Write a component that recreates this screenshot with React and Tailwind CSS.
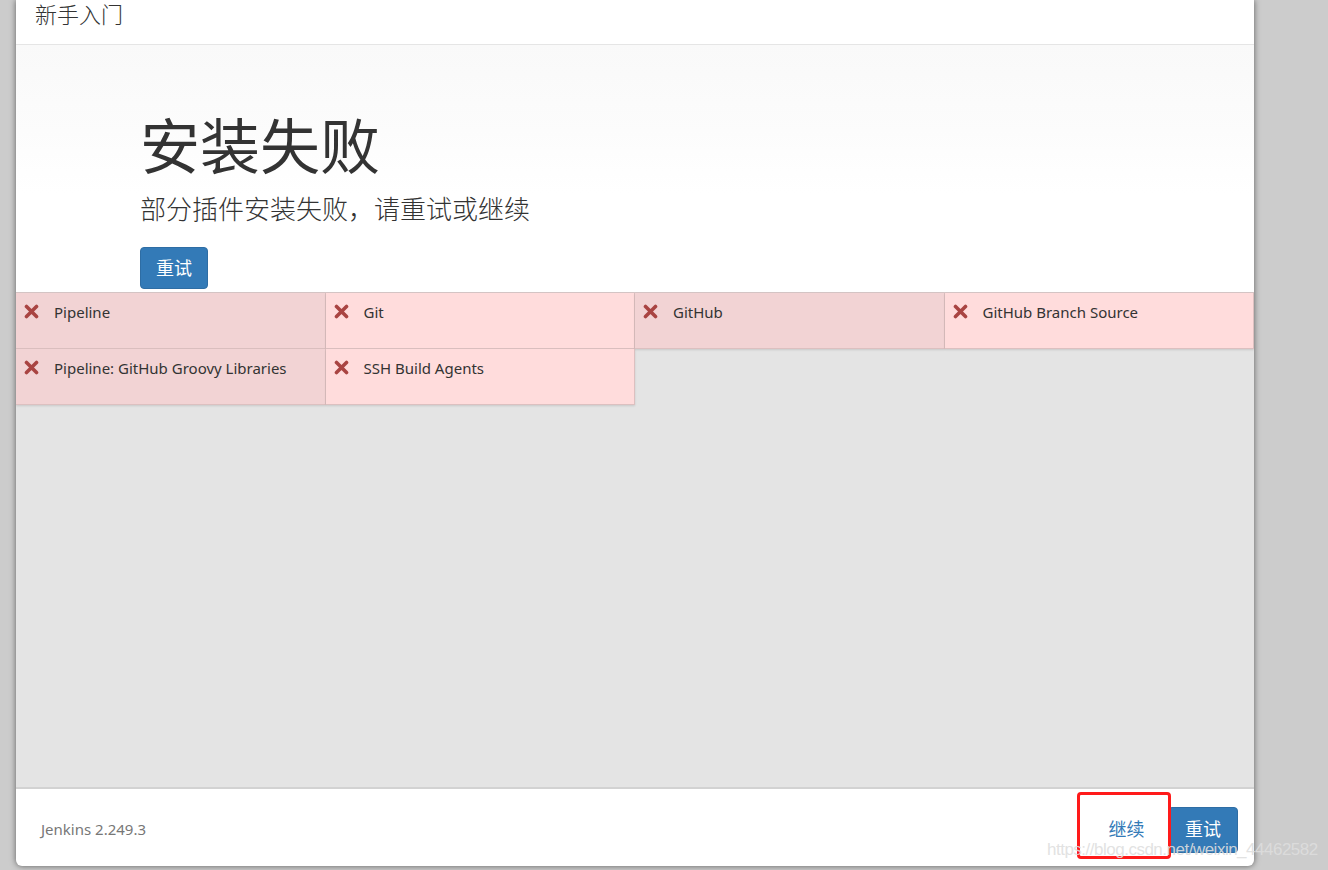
import React from "react";

const font = { fontFamily: '"Noto Sans", "Open Sans", "Noto Sans CJK SC", sans-serif' };

function XIcon() {
  return (
    <svg width="15" height="15" viewBox="0 0 15 15" className="shrink-0">
      <path d="M2.5 2.5 L12.5 12.5 M12.5 2.5 L2.5 12.5" stroke="#a94442" strokeWidth="3.6" strokeLinecap="round" />
    </svg>
  );
}

const items = [
  { name: "Pipeline", dark: true },
  { name: "Git", dark: false },
  { name: "GitHub", dark: true },
  { name: "GitHub Branch Source", dark: false },
  { name: "Pipeline: GitHub Groovy Libraries", dark: true },
  { name: "SSH Build Agents", dark: false },
];

export default function App() {
  return (
    <div className="relative w-[1328px] h-[870px] bg-[#cccccc] overflow-hidden" style={font}>
      <div className="ml-4 w-[1238px] h-[866px] bg-white rounded-b-md shadow-[0_0_6px_rgba(0,0,0,0.55)] flex flex-col overflow-hidden">
        <div className="h-[45px] shrink-0 border-b border-[#e5e5e5] pl-[19px] flex items-start">
          <div className="text-[22px] leading-[28px] text-[#333] font-light">新手入门</div>
        </div>
        <div className="h-[247px] shrink-0 bg-[linear-gradient(to_bottom,#f9f9f9_0%,#fcfcfc_35%,#ffffff_60%)] pl-[124px] pt-[68px]">
          <div className="text-[60px] leading-[66px] text-[#333]">安装失败</div>
          <div className="mt-[13px] text-[26px] leading-[34px] text-[#333] font-light">部分插件安装失败，请重试或继续</div>
          <button className="mt-[21px] h-[42px] px-[15px] bg-[#337ab7] border border-[#2e6da4] rounded text-white text-[18px] leading-none">重试</button>
        </div>
        <div className="flex-1 bg-[#e4e4e4] border-t border-[#d6c6c6]">
          <div className="grid grid-cols-4">
            {items.map((it) => (
              <div
                key={it.name}
                className={`h-[56px] flex items-start gap-[15px] pl-[8px] pt-[9px] border-r border-b border-[#dcc0c0] shadow-[0_1px_2px_rgba(0,0,0,0.12)] ${it.dark ? "bg-[#f2d3d4]" : "bg-[#ffdcdc]"}`}
              >
                <div className="pt-[2px]"><XIcon /></div>
                <span className="text-[15px] leading-[20px] text-[#333]">{it.name}</span>
              </div>
            ))}
          </div>
        </div>
        <div className="h-[79px] shrink-0 border-t-2 border-[#d2d2d2] flex items-center justify-between pl-[25px] pr-[16px]">
          <span className="text-[15px] text-[#777] mt-[4px]">Jenkins 2.249.3</span>
          <div className="flex items-center mt-[4px]">
            <button className="h-[46px] w-[70px] text-[18px] text-[#337ab7] mr-[5px] pr-[3px]">继续</button>
            <button className="h-[46px] px-4 bg-[#337ab7] border border-[#2e6da4] rounded text-white text-[18px]">重试</button>
          </div>
        </div>
      </div>
      <div className="absolute left-[1077px] top-[792px] w-[94px] h-[67px] border-[3px] border-[#ff1a1a] rounded-[4px]" />
      <div
        className="absolute left-[1047px] top-[839px] text-[17px] leading-[22px] tracking-[-0.5px] whitespace-nowrap text-[rgba(222,222,222,0.9)]"
        style={{ fontFamily: '"Liberation Sans", Arial, sans-serif' }}
      >
        https://blog.csdn.net/weixin_44462582
      </div>
    </div>
  );
}
